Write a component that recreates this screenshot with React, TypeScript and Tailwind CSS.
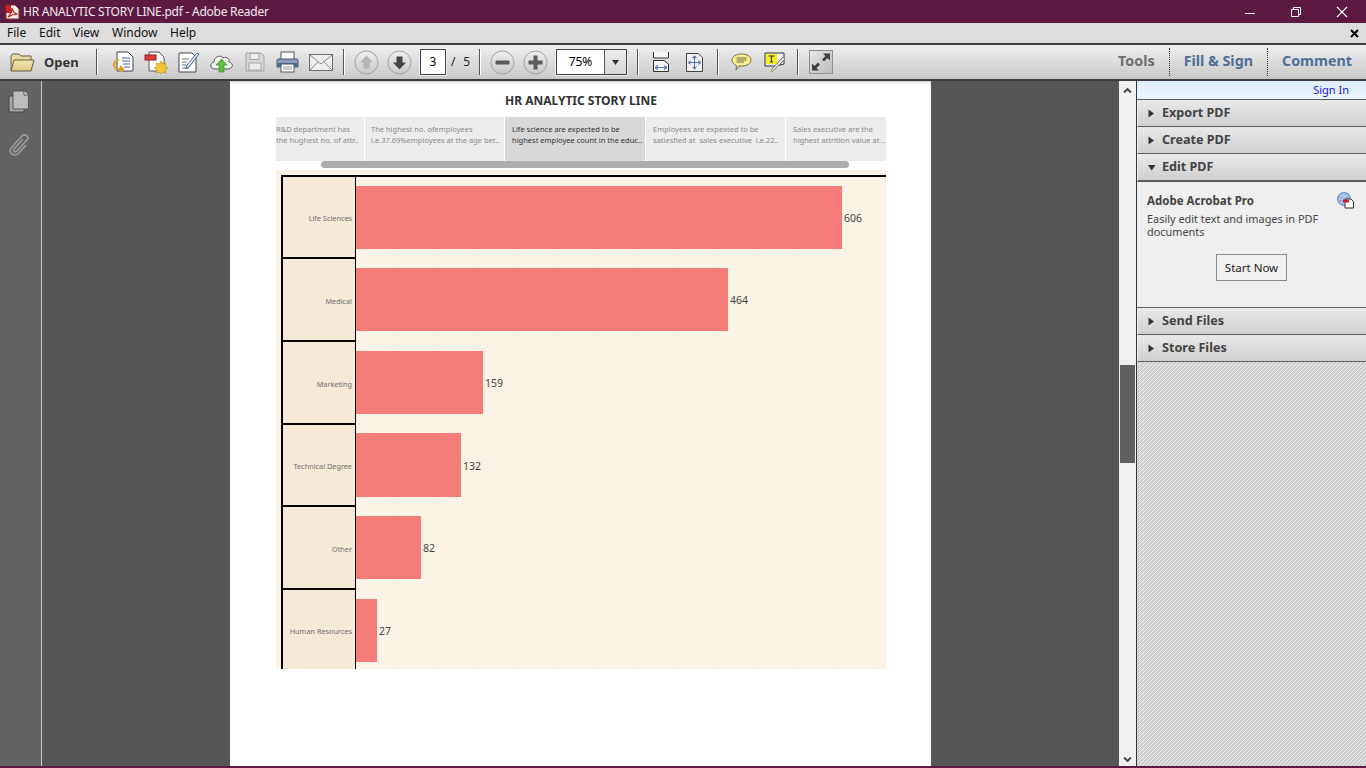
import React from 'react';

const tabs = [
  { l1: 'R&D department has', l2: 'the hughest no. of attr..', w: 'w-[89px]', pl: 'pl-0', active: false },
  { l1: 'The highest no. ofemployees', l2: 'i.e.37.69%employees at the age bet..', w: 'w-[140px]', pl: 'pl-[6px]', active: false },
  { l1: 'Life science are expected to be', l2: 'highest employee count in the educ..', w: 'w-[141px]', pl: 'pl-[7px]', active: true },
  { l1: 'Employees are expexted to be', l2: 'satiesfied at  sales executive  i.e.22..', w: 'w-[140px]', pl: 'pl-[7px]', active: false },
  { l1: 'Sales executive are the', l2: 'highest attrition value at ..', w: 'w-[100px]', pl: 'pl-[7px]', active: false },
];

const rows = [
  { label: 'Life Sciences', value: 606, barW: 'w-[486px]', h: 'h-[82px]', pb: 'pb-[1px]' },
  { label: 'Medical', value: 464, barW: 'w-[372px]', h: 'h-[83px]', pb: 'pb-[2px]' },
  { label: 'Marketing', value: 159, barW: 'w-[127px]', h: 'h-[83px]', pb: 'pb-[2px]' },
  { label: 'Technical Degree', value: 132, barW: 'w-[105px]', h: 'h-[82px]', pb: 'pb-[2px]' },
  { label: 'Other', value: 82, barW: 'w-[65px]', h: 'h-[83px]', pb: 'pb-[2px]' },
  { label: 'Human Resources', value: 27, barW: 'w-[21px]', h: 'h-[81px]', pb: 'pb-0' },
];

function Sep() {
  return <div className="w-px h-[26px] bg-[#555] border-r border-white box-content" />;
}

function Btn({ children, className = '' }: { children: React.ReactNode; className?: string }) {
  return <div className={`w-[33px] h-[36px] flex items-center justify-center shrink-0 ${className}`}>{children}</div>;
}

function RoundBtn({ color, kind }: { color: string; kind: 'up' | 'down' | 'minus' | 'plus' }) {
  return (
    <svg width="25" height="25" viewBox="0 0 25 25">
      <defs>
        <linearGradient id={`rb-${kind}`} x1="0" y1="0" x2="0" y2="1">
          <stop offset="0" stopColor="#efefef" />
          <stop offset="1" stopColor="#c9c9c9" />
        </linearGradient>
      </defs>
      <circle cx="12.5" cy="12.5" r="11.5" fill={`url(#rb-${kind})`} stroke="#a2a2a2" />
      {kind === 'up' && <path d="M12.5 5.5 L19 12.5 H15.5 V18.5 H9.5 V12.5 H6 Z" fill={color} />}
      {kind === 'down' && <path d="M12.5 19.5 L19 12.5 H15.5 V6.5 H9.5 V12.5 H6 Z" fill={color} />}
      {kind === 'minus' && <rect x="5.5" y="10.5" width="14" height="4" rx="1" fill={color} />}
      {kind === 'plus' && <path d="M10.5 5.5 H14.5 V10.5 H19.5 V14.5 H14.5 V19.5 H10.5 V14.5 H5.5 V10.5 H10.5 Z" fill={color} />}
    </svg>
  );
}

function Tri({ down = false }: { down?: boolean }) {
  return (
    <svg width="9" height="9" viewBox="0 0 9 9" className="shrink-0">
      {down ? <path d="M0 2 H7.500 L3.700 7.500 Z" fill="#333" /> : <path d="M.5 .5 L6 4.500 L.5 8.500 Z" fill="#333" />}
    </svg>
  );
}

function PanelHead({ label, down = false, thick = false, h = 'h-[27px]' }: { label: string; down?: boolean; thick?: boolean; h?: string }) {
  return (
    <div className={`${h} shrink-0 flex items-center gap-[5px] pl-[10px] pt-[1px] bg-gradient-to-b from-[#e9e9e9] to-[#cfcfcf] border-l border-[#f5f5f5] ${thick ? 'border-b-2' : 'border-b'} border-b-[#5c5c5c]`}>
      <Tri down={down} />
      <span className="text-[12.6px] font-bold text-[#444] leading-none">{label}</span>
    </div>
  );
}

export default function App() {
  return (
    <div className="w-[1366px] h-[768px] overflow-hidden flex flex-col bg-[#5c1a40] font-['Noto_Sans',sans-serif]">
      {/* Title bar */}
      <div className="h-[23px] shrink-0 flex items-center bg-[#5c1a40] pl-[5px] text-white">
        <svg width="15" height="16" viewBox="0 0 15 16" className="shrink-0">
          <path d="M1 1 H10 L14 5 V15 H1 Z" fill="#f4f0ee" stroke="#8a2a2a" />
          <path d="M1 1 H6 V9 H1 Z" fill="#c3261f" />
          <path d="M3 13 C6 10 7 6 7 4 C8 8 10 10 13 10 C9 10 6 11 3 13 Z" fill="none" stroke="#c3261f" strokeWidth="1.2" />
        </svg>
        <span className="ml-[3px] text-[12px] leading-none tracking-[-0.25px] text-[#f4eaf0]">HR ANALYTIC STORY LINE.pdf - Adobe Reader</span>
        <div className="ml-auto flex items-center">
          <svg width="46" height="16" viewBox="0 0 46 16"><path d="M1 9.5 H11" stroke="#fff" /></svg>
          <svg width="46" height="16" viewBox="0 0 46 16"><path d="M1.5 5.5 H8.5 V12.5 H1.5 Z M3.5 5 V3.5 H10.5 V10.5 H9" fill="none" stroke="#fff" /></svg>
          <svg width="30" height="16" viewBox="0 0 30 16"><path d="M1 3 L11 13 M11 3 L1 13" stroke="#fff" strokeWidth="1.1" /></svg>
        </div>
      </div>

      {/* Menu bar */}
      <div className="h-[20px] shrink-0 flex items-center bg-[#dddddd] text-[12px] text-[#111] pl-[7px] leading-none">
        <span className="w-[32px]">File</span>
        <span className="w-[34px]">Edit</span>
        <span className="w-[39px]">View</span>
        <span className="w-[58px]">Window</span>
        <span>Help</span>
        <svg width="9" height="9" viewBox="0 0 9 9" className="ml-auto mr-[7px]"><path d="M1 1 L8 8 M8 1 L1 8" stroke="#000" strokeWidth="2" /></svg>
      </div>

      {/* Toolbar */}
      <div className="h-[38px] shrink-0 flex items-center border-y-2 border-[#3c3c3c] bg-gradient-to-b from-[#efefef] to-[#c9c9c9] text-[#222]">
        <svg width="25" height="21" viewBox="0 0 25 21" className="ml-[10px] shrink-0">
          <defs>
            <linearGradient id="folder" x1="0" y1="0" x2="0" y2="1">
              <stop offset="0" stopColor="#f6e8b4" />
              <stop offset="1" stopColor="#dcc684" />
            </linearGradient>
          </defs>
          <path d="M1 19 V4 L2.5 2 H9 L11 4 H21 V8" fill="#e8d9a0" stroke="#6b6140" />
          <path d="M1 19 L4 8 H24 L21 19 Z" fill="url(#folder)" stroke="#6b6140" />
        </svg>
        <span className="ml-[9px] mt-[1px] w-[52px] text-[13px] font-bold text-[#333]">Open</span>
        <Sep />
        <div className="w-[8px]" />
        <Btn>
          <svg width="24" height="24" viewBox="0 0 24 24">
            <path d="M6 2 H17 L22 7 V21 H6 Z" fill="#fff" stroke="#444" />
            <path d="M11 8 H19 M11 11 H19 M12 14 H19 M13 17 H19" stroke="#3a62b5" strokeWidth="1.2" />
            <path d="M8 10 C2 11 1 18 7 19 H11 M9 16 L12 19 L9 22" fill="none" stroke="#e0a12c" strokeWidth="2.2" />
          </svg>
        </Btn>
        <Btn>
          <svg width="24" height="24" viewBox="0 0 24 24">
            <path d="M5 2 H15 L20 7 V21 H5 Z" fill="#fff" stroke="#555" />
            <rect x="1" y="5" width="11" height="5" fill="#dd3a3a" stroke="#902020" />
            <path d="M17 11 L19 14 L22 13 L21 16 L24 18 L21 19.5 L22 23 L19 22 L17 24 L15 22 L12 23 L13 19.5 L10 18 L13 16 L12 13 L15 14 Z" fill="#f5c233" stroke="#b98a1a" strokeWidth=".6" />
          </svg>
        </Btn>
        <Btn>
          <svg width="24" height="24" viewBox="0 0 24 24">
            <path d="M2 3 H15 L19 7 V22 H2 Z" fill="#fff" stroke="#444" />
            <path d="M5 9 H12 M5 12 H10 M5 15 H9 M5 18 H12" stroke="#777" />
            <path d="M22 4 L12 17 L9 19 L10 15 L20 3 Z" fill="#dfe6f2" stroke="#4a68a8" />
          </svg>
        </Btn>
        <Btn>
          <svg width="25" height="24" viewBox="0 0 25 24">
            <path d="M6 19 C1 19 0 13 5 12 C5 7 11 4 14 8 C18 6 21 9 20 12 C25 13 24 19 19 19 Z" fill="#f2f2f2" stroke="#555" />
            <path d="M12.5 9 L18 15 H15 V22 H10 V15 H7 Z" fill="#5bbf3c" stroke="#2d8a1f" strokeWidth=".6" />
          </svg>
        </Btn>
        <Btn>
          <svg width="20" height="20" viewBox="0 0 20 20">
            <path d="M1 1 H16 L19 4 V19 H1 Z" fill="#d8d8d8" stroke="#a6a6a6" />
            <rect x="5" y="1.5" width="9" height="6" fill="#ececec" stroke="#a6a6a6" />
            <rect x="4" y="11" width="12" height="7" fill="#ececec" stroke="#a6a6a6" />
          </svg>
        </Btn>
        <Btn>
          <svg width="23" height="22" viewBox="0 0 23 22">
            <rect x="5" y="1" width="13" height="8" fill="#fff" stroke="#555" />
            <path d="M2 8 H21 Q22 8 22 10 V16 H1 V10 Q1 8 2 8 Z" fill="#8c9fb8" stroke="#44566e" />
            <rect x="1" y="12" width="21" height="4" fill="#4d6c95" />
            <rect x="5" y="13" width="13" height="8" fill="#fff" stroke="#555" />
            <path d="M7 16 H16 M7 18 H16" stroke="#999" />
          </svg>
        </Btn>
        <Btn>
          <svg width="24" height="17" viewBox="0 0 24 17">
            <rect x=".5" y=".5" width="23" height="16" fill="#efefef" stroke="#6b6b6b" />
            <path d="M1 1 L12 10 L23 1 M1 16 L9 8 M23 16 L15 8" fill="none" stroke="#8a8a8a" />
          </svg>
        </Btn>
        <div className="w-[6px]" />
        <Sep />
        <div className="w-[5px]" />
        <Btn><RoundBtn kind="up" color="#b5b5b5" /></Btn>
        <Btn><RoundBtn kind="down" color="#444" /></Btn>
        <div className="ml-[4px] w-[26px] h-[26px] shrink-0 bg-white border border-[#444] outline outline-1 outline-[#eee] flex items-center justify-center text-[12px] text-black">3</div>
        <div className="w-[33px] pl-[5px] pr-[9px] shrink-0 flex justify-between text-[12px] text-[#222]"><span>/</span><span>5</span></div>
        <Sep />
        <div className="w-[5px]" />
        <Btn><RoundBtn kind="minus" color="#5a5a5a" /></Btn>
        <Btn><RoundBtn kind="plus" color="#5a5a5a" /></Btn>
        <div className="ml-[4px] w-[71px] h-[26px] shrink-0 flex border border-[#444] outline outline-1 outline-[#eee] bg-white text-[12px] text-black">
          <div className="w-[48px] flex items-center justify-center border-r border-[#555]">75%</div>
          <div className="flex-1 flex items-center justify-center bg-gradient-to-b from-[#ececec] to-[#d6d6d6]">
            <svg width="9" height="5" viewBox="0 0 9 5"><path d="M1 0 H8 L4.5 5 Z" fill="#333" /></svg>
          </div>
        </div>
        <div className="w-[10px]" />
        <Sep />
        <div className="w-[5px]" />
        <Btn>
          <svg width="18" height="20" viewBox="0 0 18 20">
            <path d="M1.5 0 V6 H16.5 V0" fill="#f4f4f4" stroke="#333" />
            <path d="M1.5 19.5 V8.5 H12 L16.5 12 V19.5 Z" fill="#f4f4f4" stroke="#333" />
            <path d="M3 15.5 H15 M3 15.5 L6 13.5 M3 15.5 L6 17.5 M15 15.5 L12 13.5 M15 15.5 L12 17.5" fill="none" stroke="#5a78b4" strokeWidth="1.2" />
          </svg>
        </Btn>
        <Btn>
          <svg width="17" height="19" viewBox="0 0 18 20" className="ml-[2px]">
            <path d="M.5 .5 H13 L17.5 5 V19.5 H.5 Z" fill="#f4f4f4" stroke="#333" />
            <path d="M9 3 V17 M2.5 10 H15.5 M9 3 L7 5.5 M9 3 L11 5.5 M9 17 L7 14.5 M9 17 L11 14.5 M2.5 10 L5 8 M2.5 10 L5 12 M15.5 10 L13 8 M15.5 10 L13 12" fill="none" stroke="#5a78b4" strokeWidth="1.2" />
          </svg>
        </Btn>
        <div className="w-[7px]" />
        <Sep />
        <div className="w-[6px]" />
        <Btn>
          <svg width="21" height="18" viewBox="0 0 21 18">
            <path d="M10.5 1 C16 1 20 3.500 20 7 C20 10.500 16 13 10.500 13 L8 13 L5 17 L5.500 12.500 C3 11.500 1 9.500 1 7 C1 3.500 5 1 10.500 1 Z" fill="#f7ee8f" stroke="#77734a" />
            <path d="M5.500 5 H15.500 M5.500 7 H15.500 M5.500 9 H13" stroke="#6d6a4a" />
          </svg>
        </Btn>
        <Btn>
          <svg width="22" height="21" viewBox="0 0 22 21">
            <path d="M1 1 H20 V12 L12 14 H1 Z" fill="#f4f4f4" stroke="#333" />
            <rect x="2" y="2" width="11" height="10" fill="#f6ef20" />
            <path d="M4.500 4 H10.500 M7.500 4 V10 M6 10 H9" stroke="#333" strokeWidth="1.2" fill="none" />
            <path d="M21 7 L10 18 L7 20 L8 17 L19 5 Z" fill="#dfdfdf" stroke="#777" />
            <path d="M7 20 L8 17 L10 18 Z" fill="#eadf35" />
          </svg>
        </Btn>
        <div className="w-[6px]" />
        <Sep />
        <div className="ml-[10px] w-[24px] h-[24px] shrink-0 border border-[#8d8d8d] bg-gradient-to-br from-[#e6e6e6] to-[#bcbcbc] flex items-center justify-center">
          <svg width="20" height="20" viewBox="0 0 20 20">
            <path d="M12 1.500 H19 V8.500 L16.500 6 L13 9.500 L11 7.500 L14.500 4 Z M1 11.500 L3.500 14 L7 10.500 L9 12.500 L5.500 16 L8 18.500 H1 Z" fill="#3d3d3d" />
          </svg>
        </div>
        <div className="ml-auto flex items-center h-full text-[14.3px] font-bold leading-none">
          <span className="text-[#6e6e6e] pb-[1px]">Tools</span>
          <div className="mx-[14px] h-[28px] border-l border-dotted border-[#333]" />
          <span className="text-[#4f6f97] pb-[1px]">Fill &amp; Sign</span>
          <div className="mx-[14px] h-[28px] border-l border-dotted border-[#333]" />
          <span className="text-[#4f6f97] mr-[14px] pb-[1px]">Comment</span>
        </div>
      </div>

      {/* Main area */}
      <div className="h-[685px] shrink-0 flex">
        {/* Left rail */}
        <div className="w-[42px] shrink-0 bg-[#636363] border-r border-[#c8c8c8] flex flex-col items-center pt-[9px] pr-[3px]">
          <svg width="22" height="24" viewBox="0 0 22 24">
            <path d="M1 6 H16 V22 H1 Z" fill="#a8a8a8" stroke="#444" />
            <path d="M5 1 H16 L20.500 5 V19 H5 Z" fill="#bdbdbd" stroke="#555" />
            <path d="M16 1 V5 H20.500" fill="#e5e5e5" stroke="#555" />
          </svg>
          <svg width="22" height="24" viewBox="0 0 22 24" className="mt-[19px]">
            <path d="M19 3 C17 1 15 2 13 4 L4 14 C1 17 2 20 4 21 C6 22.500 9 22 11 20 L18 12 M15 6 L6 16 C4.500 18 7 20 9 18 L17 9 C20 6 21 5 19 3" fill="none" stroke="#9d9d9d" strokeWidth="1.600" />
          </svg>
        </div>

        {/* Document view */}
        <div className="w-[1077px] shrink-0 bg-[#565656] pl-[188px] overflow-hidden">
          <div className="w-[701px] h-full bg-white pl-[46px] flex flex-col shadow-[inset_0_3px_3px_-2px_rgba(0,0,0,0.25)]">
            <div className="w-[610px] h-[36px] flex items-end justify-center pb-[10px]">
              <span className="text-[12px] font-bold leading-none text-[#333]">HR ANALYTIC STORY LINE</span>
            </div>
            <div className="w-[610px] h-[44px] flex text-[7.5px] leading-[11px]">
              {tabs.map((t) => (
                <div key={t.l1} className={`${t.w} ${t.pl} shrink-0 pt-[7px] overflow-hidden whitespace-pre border-r border-white last:border-r-0 ${t.active ? 'bg-[#d8d8d8] text-[#333]' : 'bg-[#ececec] text-[#8a8a8a]'}`}>
                  <div>{t.l1}</div>
                  <div>{t.l2}</div>
                </div>
              ))}
            </div>
            <div className="w-[610px] h-[9px] pl-[45px]">
              <div className="w-[528px] h-[7px] rounded-full bg-[#adadad]" />
            </div>
            {/* Bar chart */}
            <div className="w-[610px] h-[499px] overflow-hidden bg-[#faf3e6] pt-[5px] pl-[5px]">
              <div className="border-t-2 border-black">
                {rows.map((r) => (
                  <div key={r.label} className={`${r.h} flex`}>
                    <div className={`w-[75px] shrink-0 bg-[#f5e9d8] border-l-2 border-r border-l-black border-r-black border-b-2 pt-[3px] flex items-center justify-end pr-[3px] text-[7.3px] text-[#6f6f6f] whitespace-nowrap ${r.label === 'Human Resources' ? 'border-b-transparent' : 'border-b-black'}`}>
                      {r.label}
                    </div>
                    <div className={`flex-1 flex items-center ${r.pb} bg-[repeating-linear-gradient(90deg,transparent_0,transparent_39px,#f6f0e4_39px,#f6f0e4_40px)]`}>
                      <div className={`${r.barW} h-[63.5px] bg-[#f37b78]`} />
                      <span className="ml-[2px] mt-[2px] text-[10.5px] leading-none text-[#444]">{r.value}</span>
                    </div>
                  </div>
                ))}
              </div>
            </div>
          </div>
        </div>

        {/* Vertical scrollbar */}
        <div className="w-[18px] shrink-0 bg-[#f0f0f0] flex flex-col items-center border-r border-[#333]">
          <svg width="9" height="7" viewBox="0 0 9 7" className="mt-[6px] shrink-0"><path d="M1 5.500 L4.500 2 L8 5.500" fill="none" stroke="#444" strokeWidth="1.800" /></svg>
          <div className="mt-[271px] w-[15px] h-[98px] shrink-0 bg-[#606060]" />
          <svg width="9" height="7" viewBox="0 0 9 7" className="mt-auto mb-[3px] shrink-0"><path d="M1 1.500 L4.500 5 L8 1.500" fill="none" stroke="#444" strokeWidth="1.800" /></svg>
        </div>

        {/* Right pane */}
        <div className="flex-1 flex flex-col">
          <div className="h-[19px] shrink-0 flex items-center justify-end pr-[17px] pb-[2px] bg-gradient-to-b from-[#dcedfb] to-[#eef6fd] border-b border-[#5c5c5c] text-[11px] leading-none text-[#1616e0]">Sign In</div>
          <PanelHead label="Export PDF" />
          <PanelHead label="Create PDF" />
          <PanelHead label="Edit PDF" down thick h="h-[28px]" />
          <div className="h-[126px] shrink-0 bg-[#efefef] border-b border-[#5c5c5c] pl-[10px] pr-[12px] pt-[11px]">
            <div className="flex justify-between">
              <span className="text-[11.5px] font-bold leading-[16px] text-[#444]">Adobe Acrobat Pro</span>
              <svg width="17" height="17" viewBox="0 0 17 17" className="-mt-[1px] shrink-0">
                <circle cx="7" cy="7" r="6.500" fill="#8db4e2" stroke="#5f8dc6" />
                <path d="M1 7 H13 M7 1 V13 M3 3 Q7 6 11 3 M3 11 Q7 8 11 11" stroke="#d5e4f5" fill="none" strokeWidth=".7" />
                <path d="M8 7 H14 L16.500 9.500 V16 H8 Z" fill="#fff" stroke="#333" />
                <rect x="6" y="7.500" width="6" height="3" fill="#d2202c" />
              </svg>
            </div>
            <p className="mt-[3px] text-[10.9px] leading-[13px] text-[#444]">Easily edit text and images in PDF documents</p>
            <div className="mt-[16px] ml-[69px]">
              <div className="w-[71px] h-[27px] flex items-center justify-center bg-[#f0f0f0] border border-[#8a8a8a] text-[11.5px] text-[#222]">Start Now</div>
            </div>
          </div>
          <PanelHead label="Send Files" />
          <PanelHead label="Store Files" />
          <div className="flex-1 bg-[linear-gradient(135deg,#efefef_15%,#cdcdcd_15%,#cdcdcd_50%,#efefef_50%,#efefef_65%,#cdcdcd_65%)] bg-[length:4px_4px]" />
        </div>
      </div>
    </div>
  );
}
